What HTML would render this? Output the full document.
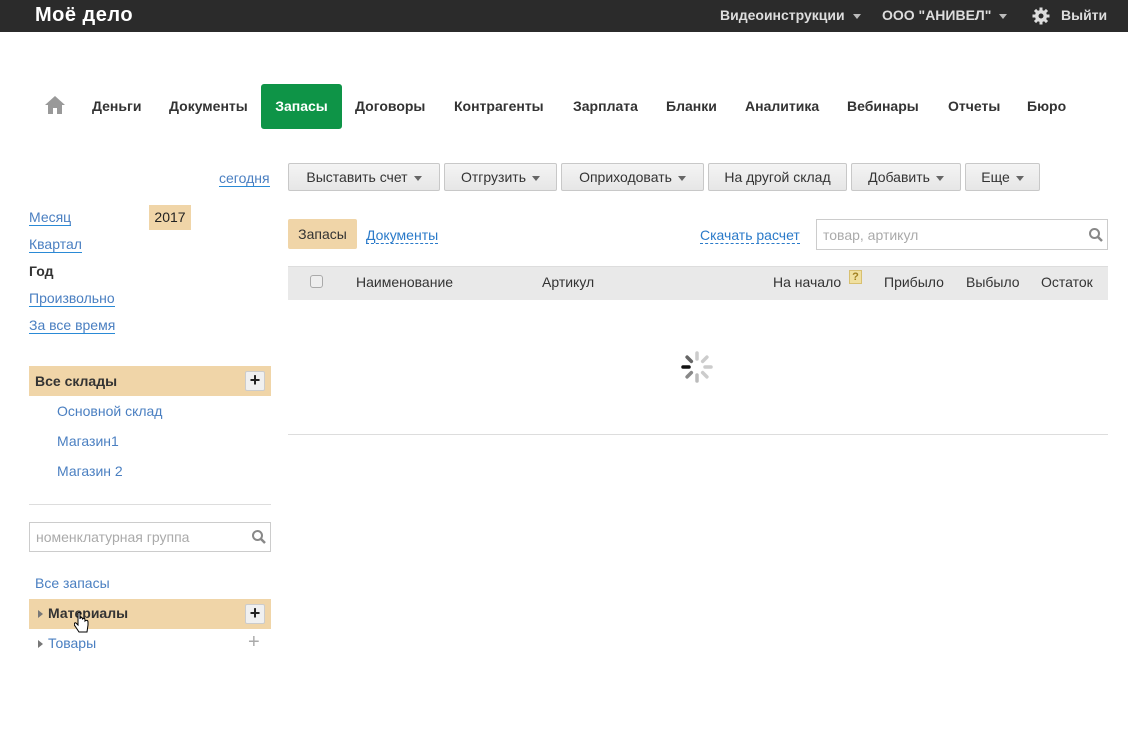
<!DOCTYPE html>
<html><head><meta charset="utf-8"><style>
*{box-sizing:border-box;margin:0;padding:0}
body{width:1128px;height:752px;position:relative;background:#fff;font-family:"Liberation Sans",Arial,sans-serif;font-size:14px;color:#333;overflow:hidden}
.a{position:absolute;white-space:nowrap}
.top{position:absolute;left:0;top:0;width:1128px;height:32px;background:#2b2b2b}
.tw{color:#ddd;font-weight:bold;font-size:14px;top:7px}
.nav{font-weight:bold;font-size:14px;color:#333;top:98px}
.btn{position:absolute;top:163px;height:28px;border:1px solid #c8c8c8;border-radius:2px;background:linear-gradient(#f4f4f4,#e6e6e6);font-size:14px;color:#333;text-align:center;line-height:26px}
.car{display:inline-block;width:0;height:0;border-left:4px solid transparent;border-right:4px solid transparent;border-top:5px solid #666;vertical-align:middle;margin-left:6px}
.lnk{color:#4a7fc1;border-bottom:1px solid #2a8ad6;line-height:16px}
.dash{color:#2a7ac9;border-bottom:1px dashed #2a7ac9;line-height:16px}
.bl{color:#4a7fc1}
.plus{position:absolute;width:20px;height:20px;border:1px solid #ccc;background:#f0f0f0;border-radius:2px;font-weight:bold;font-size:18px;line-height:17px;text-align:center;color:#222}
.tri{position:absolute;width:0;height:0;border-top:4px solid transparent;border-bottom:4px solid transparent;border-left:5px solid #777}
</style></head><body>
<div class="top"></div>
<div class="a" style="left:35px;top:4px;color:#fff;font-weight:bold;font-size:20px;letter-spacing:0.5px">Моё дело</div>
<div class="a tw" style="left:720px">Видеоинструкции <span class="car" style="border-top-color:#bbb;margin-left:4px"></span></div>
<div class="a tw" style="left:882px">ООО "АНИВЕЛ" <span class="car" style="border-top-color:#bbb;margin-left:4px"></span></div>
<svg class="a" style="left:1032px;top:7px" width="18" height="18" viewBox="0 0 18 18"><g fill="#ddd"><circle cx="9" cy="9" r="6"/><rect x="7.5" y="0.5" width="3" height="17"/><rect x="0.5" y="7.5" width="17" height="3"/><rect x="7.5" y="0.5" width="3" height="17" transform="rotate(45 9 9)"/><rect x="7.5" y="0.5" width="3" height="17" transform="rotate(-45 9 9)"/></g><circle cx="9" cy="9" r="2.5" fill="#2b2b2b"/></svg>
<div class="a tw" style="left:1061px">Выйти</div>

<svg class="a" style="left:44px;top:95px" width="22" height="20" viewBox="0 0 22 20"><path d="M11 1 L1 10 H4 V19 H9 V13 H13 V19 H18 V10 H21 Z" fill="#999"/></svg>
<div class="a nav" style="left:92px">Деньги</div>
<div class="a nav" style="left:169px">Документы</div>
<div class="a" style="left:261px;top:84px;width:81px;height:45px;background:#0e9447;border-radius:3px;color:#fff;font-weight:bold;text-align:center;line-height:44px">Запасы</div>
<div class="a nav" style="left:355px">Договоры</div>
<div class="a nav" style="left:454px">Контрагенты</div>
<div class="a nav" style="left:573px">Зарплата</div>
<div class="a nav" style="left:666px">Бланки</div>
<div class="a nav" style="left:745px">Аналитика</div>
<div class="a nav" style="left:847px">Вебинары</div>
<div class="a nav" style="left:948px">Отчеты</div>
<div class="a nav" style="left:1027px">Бюро</div>

<div class="a lnk" style="left:219px;top:170px">сегодня</div>
<div class="a lnk" style="left:29px;top:209px">Месяц</div>
<div class="a" style="left:149px;top:205px;width:42px;height:25px;background:#f0d5a8;color:#222;text-align:center;line-height:25px">2017</div>
<div class="a lnk" style="left:29px;top:236px">Квартал</div>
<div class="a" style="left:29px;top:263px;font-weight:bold;color:#333">Год</div>
<div class="a lnk" style="left:29px;top:290px">Произвольно</div>
<div class="a lnk" style="left:29px;top:317px">За все время</div>

<div class="a" style="left:29px;top:366px;width:242px;height:30px;background:#f0d5a8"></div>
<div class="a" style="left:35px;top:373px;font-weight:bold">Все склады</div>
<div class="plus" style="left:245px;top:371px">+</div>
<div class="a bl" style="left:57px;top:403px">Основной склад</div>
<div class="a bl" style="left:57px;top:433px">Магазин1</div>
<div class="a bl" style="left:57px;top:463px">Магазин 2</div>
<div class="a" style="left:29px;top:504px;width:242px;height:1px;background:#ddd"></div>
<div class="a" style="left:29px;top:522px;width:242px;height:30px;border:1px solid #ccc"></div>
<div class="a" style="left:36px;top:529px;color:#aaa">номенклатурная группа</div>
<svg class="a" style="left:251px;top:529px" width="16" height="16" viewBox="0 0 16 16"><circle cx="6.5" cy="6.5" r="4.5" fill="none" stroke="#888" stroke-width="2"/><path d="M10 10 L14 14" stroke="#888" stroke-width="2.5"/></svg>
<div class="a bl" style="left:35px;top:575px">Все запасы</div>
<div class="a" style="left:29px;top:599px;width:242px;height:30px;background:#f0d5a8"></div>
<div class="tri" style="left:38px;top:610px"></div>
<div class="a" style="left:48px;top:605px;font-weight:bold">Материалы</div>
<div class="plus" style="left:245px;top:604px">+</div>
<div class="tri" style="left:38px;top:640px"></div>
<div class="a bl" style="left:48px;top:635px">Товары</div>
<div class="a" style="left:248px;top:631px;font-size:20px;color:#aaa">+</div>
<svg class="a" style="left:74px;top:612px" width="16" height="24" viewBox="0 0 16 24"><path d="M4 1 V13 L2 11 C0 10 0 13 1 14 L5 20 H13 L14 13 V10 C14 8 12 8 11 9 V8 C11 6 9 6 8.5 7.5 V7 C8.5 5 6 5 6 7 V1 C6 0 4 0 4 1Z" fill="#fff" stroke="#000" stroke-width="1"/></svg>

<div class="btn" style="left:288px;width:152px">Выставить счет<span class="car"></span></div>
<div class="btn" style="left:444px;width:113px">Отгрузить<span class="car"></span></div>
<div class="btn" style="left:561px;width:143px">Оприходовать<span class="car"></span></div>
<div class="btn" style="left:708px;width:139px">На другой склад</div>
<div class="btn" style="left:851px;width:110px">Добавить<span class="car"></span></div>
<div class="btn" style="left:965px;width:75px">Еще<span class="car"></span></div>

<div class="a" style="left:288px;top:219px;width:69px;height:30px;background:#f0d5a8;border-radius:2px;text-align:center;line-height:30px">Запасы</div>
<div class="a dash" style="left:366px;top:227px">Документы</div>
<div class="a dash" style="left:700px;top:227px">Скачать расчет</div>
<div class="a" style="left:816px;top:219px;width:292px;height:31px;border:1px solid #ccc"></div>
<div class="a" style="left:823px;top:227px;color:#aaa">товар, артикул</div>
<svg class="a" style="left:1088px;top:227px" width="16" height="16" viewBox="0 0 16 16"><circle cx="6.5" cy="6.5" r="4.5" fill="none" stroke="#888" stroke-width="2"/><path d="M10 10 L14 14" stroke="#888" stroke-width="2.5"/></svg>

<div class="a" style="left:288px;top:266px;width:820px;height:34px;background:#e9e9e9;border-top:1px solid #ddd"></div>
<div class="a" style="left:310px;top:275px;width:13px;height:13px;border:1px solid #aaa;border-radius:3px;background:#eee"></div>
<div class="a" style="left:356px;top:274px">Наименование</div>
<div class="a" style="left:542px;top:274px">Артикул</div>
<div class="a" style="left:773px;top:274px">На начало</div>
<div class="a" style="left:849px;top:270px;width:13px;height:14px;background:#f0e0a0;border:1px solid #d8c070;font-size:11px;font-weight:bold;color:#a08020;text-align:center;line-height:12px">?</div>
<div class="a" style="left:884px;top:274px">Прибыло</div>
<div class="a" style="left:966px;top:274px">Выбыло</div>
<div class="a" style="left:1041px;top:274px">Остаток</div>

<svg class="a" style="left:680px;top:350px" width="34" height="34" viewBox="0 0 34 34"><g stroke-width="3.5" stroke-linecap="round">
<line x1="17" y1="3" x2="17" y2="9" stroke="#ccc"/><line x1="17" y1="3" x2="17" y2="9" stroke="#ccc" transform="rotate(45 17 17)"/><line x1="17" y1="3" x2="17" y2="9" stroke="#ccc" transform="rotate(90 17 17)"/><line x1="17" y1="3" x2="17" y2="9" stroke="#ccc" transform="rotate(135 17 17)"/><line x1="17" y1="3" x2="17" y2="9" stroke="#bbb" transform="rotate(180 17 17)"/><line x1="17" y1="3" x2="17" y2="9" stroke="#888" transform="rotate(225 17 17)"/><line x1="17" y1="3" x2="17" y2="9" stroke="#111" transform="rotate(270 17 17)"/><line x1="17" y1="3" x2="17" y2="9" stroke="#666" transform="rotate(315 17 17)"/></g></svg>
<div class="a" style="left:288px;top:434px;width:820px;height:1px;background:#ddd"></div>
</body></html>
